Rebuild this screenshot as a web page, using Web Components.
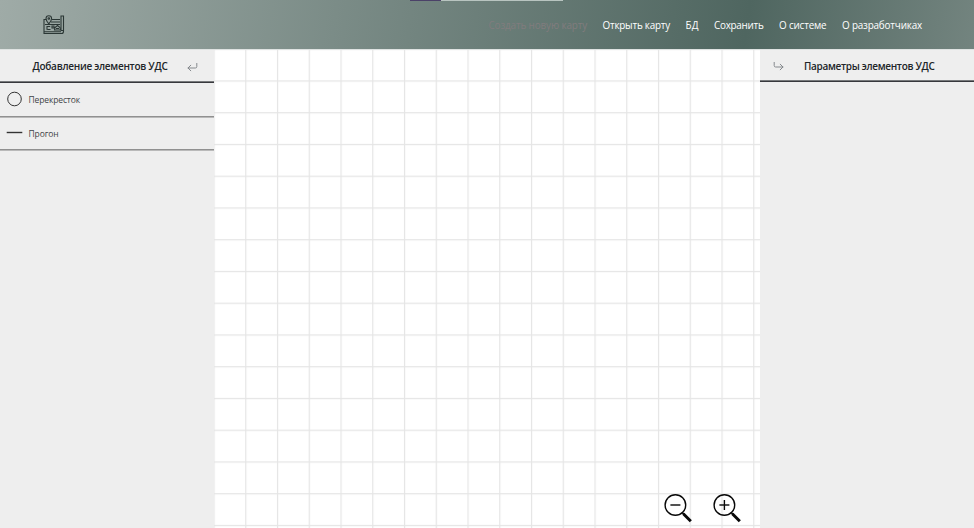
<!DOCTYPE html>
<html lang="ru">
<head>
<meta charset="utf-8">
<title>Редактор УДС</title>
<style>
html,body{margin:0;height:100%;overflow:hidden;font-family:"Open Sans","Noto Sans",sans-serif}
</style>
</head>
<body>
<map-editor></map-editor>
<script>
const define = (name, html, setup) => customElements.define(name, class extends HTMLElement {
  connectedCallback() {
    if (this.shadowRoot) return;
    this.attachShadow({mode: 'open'}).innerHTML = html;
    if (setup) setup(this);
  }
});

// A one-line label whose tracking is adjusted to the given width.
define('fit-label', `<style>:host{display:block;white-space:nowrap;flex:none}span{display:inline-block}</style><span><slot></slot></span>`, el => {
  const width = parseFloat(el.getAttribute('width'));
  el.style.width = width + 'px';
  const span = el.shadowRoot.querySelector('span');
  const natural = span.getBoundingClientRect().width;
  span.style.letterSpacing = (width - natural) / el.textContent.length + 'px';
});

define('map-logo', `<style>:host{display:block;width:22px;height:20px}svg{display:block}</style>
<svg width="22" height="20" viewBox="0 0 22 20" fill="none" stroke="#2b3735" stroke-width="1.100">
<path d="M3 4.500H1v14h17.500a2 2 0 0 0 2-2V1h-2.500v14.500M18 15.500h2.500M1 16.800h17M9 4.500h8M8 7h9M2 9.500h15"/>
<path d="M5.800 8.800C3.800 6.500 3 5.200 3 3.500a2.800 2.800 0 0 1 5.600 0c0 1.700-.8 3-2.800 5.300z"/><circle cx="5.800" cy="3.500" r=".8"/>
<path d="M4 14.800v-3.300h3.200M4.500 14.500h3M9 11h2v2h-2zM11.500 15l.5-2.500 2.500-2 2.500 2 .5 2.500zM13 13.500h3"/></svg>`);

define('nav-link', `<style>:host{display:block;color:#fff;font-size:9.900px;line-height:14px}:host([disabled]){color:#817c7e}</style><slot></slot>`);

define('app-header', `<style>
:host{display:flex;height:49px;box-sizing:border-box;align-items:center;padding:0 52px 0 43px;background:linear-gradient(98deg,#9faba7 0%,#4f6660 76.500%,#73847f 100%);position:relative}
nav{display:flex;gap:15.500px;margin-left:auto;padding-top:1px}
.progress{position:absolute;left:410px;top:0;width:153px;height:1px;background:linear-gradient(90deg,#4b4168 31px,#b8c4c0 31px)}
</style><div class="progress"></div><map-logo></map-logo><nav>
<nav-link disabled><fit-label width="98.500">Создать новую карту</fit-label></nav-link>
<nav-link><fit-label width="67.500">Открыть карту</fit-label></nav-link>
<nav-link><fit-label width="13">БД</fit-label></nav-link>
<nav-link><fit-label width="49.500">Сохранить</fit-label></nav-link>
<nav-link><fit-label width="47.500">О системе</fit-label></nav-link>
<nav-link><fit-label width="80">О разработчиках</fit-label></nav-link></nav>`);

define('panel-title', `<style>
:host{display:flex;box-sizing:border-box;align-items:center;font-size:10px;font-weight:600;color:#212529;background:linear-gradient(#77797b,#77797b) 0 100%/100% 1px no-repeat;box-shadow:0 1px 0 #37383c;position:relative}
</style><slot></slot>`);

define('turn-arrow', `<style>:host{display:block;width:11px;height:9px;margin-top:2px}:host([right]) svg{transform:scaleX(-1)}svg{display:block}</style>
<svg width="11" height="9" viewBox="0 0 11 9" fill="none" stroke="#85898d" stroke-width="1" stroke-linecap="round"><path d="M9.800.3v3.300q0 1.400-1.400 1.400H1M3.800 2.200L1 5l2.800 2.800"/></svg>`);

define('element-item', `<style>
:host{display:flex;height:33.500px;box-sizing:border-box;align-items:center;padding-left:6px;gap:5.500px;font-size:8.500px;color:#3f4347;border-bottom:1px solid #909090;box-shadow:0 1px 0 #b9b9b9;padding-top:1px}
svg{display:block;flex:none}
</style><svg width="17" height="17" viewBox="0 0 17 17" fill="none" stroke="#333"></svg><slot></slot>`, el => {
  el.shadowRoot.querySelector('svg').innerHTML = el.getAttribute('kind') === 'crossing'
    ? '<circle cx="8.500" cy="8" r="6.800" stroke-width="1"/>' : '<path d="M.7 7.500h15.600" stroke-width="1.400"/>';
});

define('side-panel', `<style>:host{display:block;background:#eee}</style><slot></slot>`);

define('zoom-button', `<style>:host{display:block;width:28px;height:29px}svg{display:block}</style>
<svg width="28" height="29" viewBox="0 0 28 29" fill="none" stroke="#080808"><circle cx="11.400" cy="11" r="10.300" stroke-width="1.400"/><path d="M6.400 11h10" stroke-width="1.400"/><path class="v" d="M11.400 6v10" stroke-width="1.400"/><path d="M18 18.400l2 2" stroke-width="1.500"/><path d="M19.300 19.700l7.500 7.500" stroke-width="3"/></svg>`, el => {
  if (!el.hasAttribute('plus')) el.shadowRoot.querySelector('.v').remove();
});

define('map-canvas', `<style>
:host{display:flex;justify-content:flex-end;align-items:flex-end;gap:20.500px;box-sizing:border-box;padding:0 19.200px 5px 0;position:relative;background:#fff;min-width:0}
.grid{position:absolute;inset:0;width:100%;height:100%}
zoom-button{position:relative}
</style><svg class="grid"><defs><pattern id="g" x="31.200" y="30.400" width="31.750" height="31.750" patternUnits="userSpaceOnUse"><path d="M.6 0V31.750M0 .6H31.750" stroke="#e5e5e5" stroke-width="1.200"/></pattern></defs><rect width="100%" height="100%" fill="url(#g)"/></svg>
<zoom-button></zoom-button><zoom-button plus></zoom-button>`);

define('map-editor', `<style>
:host{display:grid;grid-template-rows:49px 1fr;height:100vh}
main{display:grid;grid-template-columns:214px 1fr 214px;border-top:1px solid #dfe3e2}
.left{height:32px;padding-left:32.500px;gap:19.500px;margin-bottom:1px}
.right{height:31px;padding-left:13px;gap:20px}
</style><app-header></app-header><main>
<side-panel><panel-title class="left"><fit-label width="135">Добавление элементов УДС</fit-label><turn-arrow></turn-arrow></panel-title>
<element-item kind="crossing"><fit-label width="51.500">Перекресток</fit-label></element-item>
<element-item kind="span"><fit-label width="30">Прогон</fit-label></element-item></side-panel>
<map-canvas></map-canvas>
<side-panel><panel-title class="right"><turn-arrow right></turn-arrow><fit-label width="130.500">Параметры элементов УДС</fit-label></panel-title></side-panel></main>`);
</script>
</body>
</html>
